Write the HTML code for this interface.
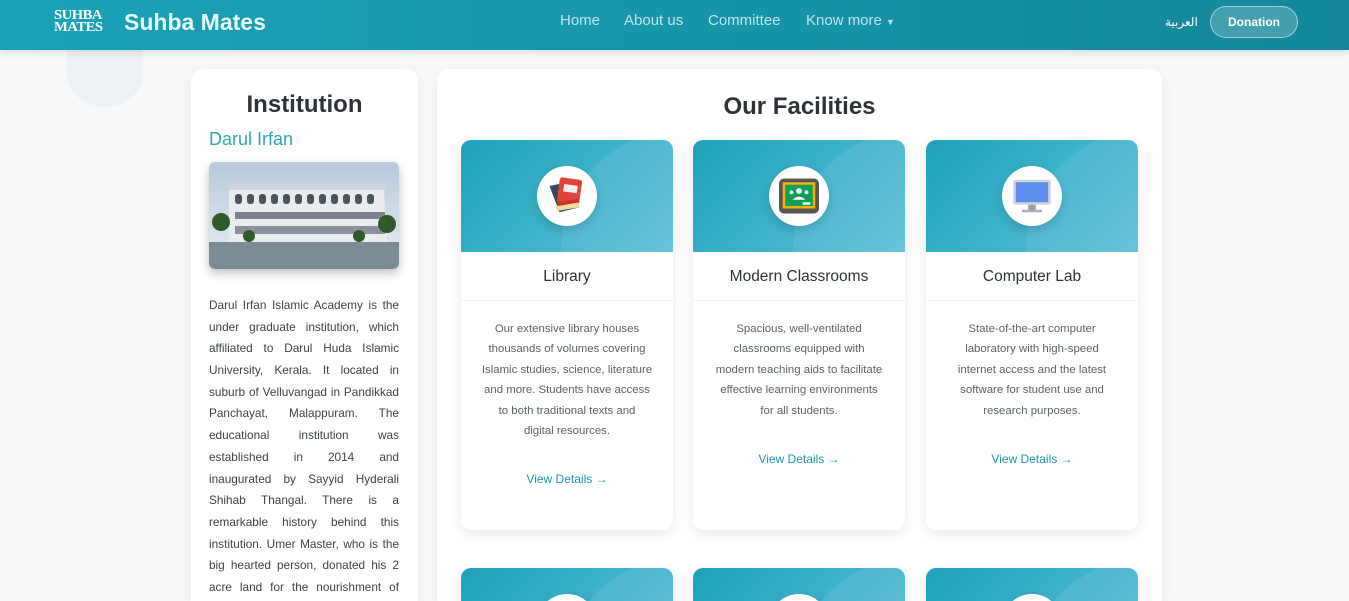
<!DOCTYPE html>
<html><head><meta charset="utf-8"><style>
*{box-sizing:border-box;margin:0;padding:0}
html,body{width:1349px;height:601px;overflow:hidden}
body{background:#f6f8fa;font-family:"Liberation Sans",sans-serif;position:relative}
.nav{position:absolute;left:0;top:0;width:1349px;height:50px;background:linear-gradient(90deg,#1ba2b8,#138799);box-shadow:0 2px 8px rgba(0,0,0,.12);z-index:5}
.logo{position:absolute;left:54px;top:10px;color:#fff;font-family:"Liberation Serif",serif;font-weight:bold;font-size:14px;line-height:12px;letter-spacing:-.5px;transform:scaleX(1.05);transform-origin:left}
.brand{position:absolute;left:124px;top:9px;color:#e6fbff;font-weight:bold;font-size:23px}
.links{position:absolute;top:12px;font-size:15px;color:#bfe6ee}
.links span{position:absolute;white-space:nowrap}
.ar{position:absolute;left:1165px;top:15px;color:#fff;font-size:12px;font-family:"DejaVu Sans",sans-serif}
.don{position:absolute;left:1210px;top:6px;width:88px;height:32px;border:1px solid rgba(255,255,255,.5);border-radius:16px;background:rgba(255,255,255,.2);color:#fff;font-weight:bold;font-size:12px;text-align:center;line-height:30px}
.blob{position:absolute;left:67px;top:40px;width:76px;height:67px;border-radius:0 0 50% 50%;background:#edf3f4}
.side{position:absolute;left:191px;top:69px;width:227px;height:532px;background:#fff;border-radius:12px 12px 0 0;box-shadow:0 4px 14px rgba(0,0,0,.06)}
.side h2{position:absolute;left:0;width:227px;top:22px;text-align:center;font-size:24px;color:#2d3338}
.side h3{position:absolute;left:18px;top:60px;font-size:18px;font-weight:normal;color:#2aa6bb}
.img{position:absolute;left:18px;top:93px;width:190px;height:107px;border-radius:6px;overflow:hidden;box-shadow:0 4px 10px rgba(0,0,0,.25)}
.stxt{position:absolute;left:18px;top:226px;width:190px;font-size:11.8px;line-height:21.7px;color:#3d4348}
.stxt div{text-align:justify;text-align-last:justify;white-space:nowrap;height:21.7px}
.main{position:absolute;left:437px;top:69px;width:725px;height:532px;background:#fff;border-radius:12px 12px 0 0;box-shadow:0 4px 14px rgba(0,0,0,.06)}
.main h2{position:absolute;left:0;width:725px;top:24px;text-align:center;font-size:24px;color:#2d3338}
.card{position:absolute;width:212px;height:390px;background:#fff;border-radius:10px;box-shadow:0 4px 14px rgba(0,0,0,.09);overflow:hidden}
.card.b{height:33px;border-radius:10px 10px 0 0}
.hd{height:112px;background:linear-gradient(135deg,#1ea3bb,#5bbfd8);position:relative;overflow:hidden}
.hd:after{content:"";position:absolute;left:100px;top:-10px;width:240px;height:240px;border-radius:50%;background:rgba(255,255,255,.08)}
.ic{position:absolute;left:76px;top:26px;width:60px;height:60px;border-radius:50%;background:#fff;box-shadow:0 4px 10px rgba(0,0,0,.15);z-index:2}
.ic svg{position:absolute;left:10px;top:10px}
.tt{height:49px;border-bottom:1px solid #eef0f2;text-align:center;line-height:49px;font-size:15.5px;color:#2d3338}
.ds{padding:18px 4px 0;text-align:center;font-size:11.4px;line-height:20.4px;color:#5a6268;white-space:nowrap}
.vd{text-align:center;font-size:12px;color:#1a98b0;margin-top:31px}
</style></head><body>
<div class="nav">
<div class="logo">SUHBA<br>MATES</div>
<div class="brand">Suhba Mates</div>
<div class="links"><span style="left:560px">Home</span><span style="left:624px">About us</span><span style="left:708px">Committee</span><span style="left:806px">Know more <span style="font-size:9px;position:static">▼</span></span></div>
<div class="ar">العربية</div>
<div class="don">Donation</div>
</div>
<div class="blob"></div>
<div class="side">
<h2>Institution</h2>
<h3>Darul Irfan</h3>
<div class="img"><svg width="190" height="107" viewBox="0 0 190 107">
<defs><linearGradient id="sk" x1="0" y1="0" x2="0" y2="1"><stop offset="0" stop-color="#b7c9dc"/><stop offset="1" stop-color="#e8eef4"/></linearGradient></defs>
<rect width="190" height="107" fill="url(#sk)"/>
<polygon points="20,22 175,28 178,82 20,84" fill="#e9ecef"/>
<rect x="20" y="22" width="158" height="6" fill="#cfd5db"/>
<g fill="#4b5560">
<rect x="26" y="32" width="7" height="10" rx="3"/><rect x="38" y="32" width="7" height="10" rx="3"/><rect x="50" y="32" width="7" height="10" rx="3"/><rect x="62" y="32" width="7" height="10" rx="3"/><rect x="74" y="32" width="7" height="10" rx="3"/><rect x="86" y="32" width="7" height="10" rx="3"/><rect x="98" y="32" width="7" height="10" rx="3"/><rect x="110" y="32" width="7" height="10" rx="3"/><rect x="122" y="32" width="7" height="10" rx="3"/><rect x="134" y="32" width="7" height="10" rx="3"/><rect x="146" y="32" width="7" height="10" rx="3"/><rect x="158" y="32" width="7" height="10" rx="3"/>
<rect x="26" y="50" width="150" height="7" opacity=".7"/><rect x="26" y="64" width="150" height="8" opacity=".6"/></g>
<rect x="0" y="80" width="190" height="27" fill="#7c8c94"/>
<g fill="#2f5a2a"><circle cx="12" cy="60" r="9"/><circle cx="178" cy="62" r="9"/><circle cx="40" cy="74" r="6"/><circle cx="150" cy="74" r="6"/></g>
</svg></div>
<div class="stxt">
<div>Darul Irfan Islamic Academy is the</div>
<div>under graduate institution, which</div>
<div>affiliated to Darul Huda Islamic</div>
<div>University, Kerala. It located in</div>
<div>suburb of Velluvangad in Pandikkad</div>
<div>Panchayat, Malappuram. The</div>
<div>educational institution was</div>
<div>established in 2014 and</div>
<div>inaugurated by Sayyid Hyderali</div>
<div>Shihab Thangal. There is a</div>
<div>remarkable history behind this</div>
<div>institution. Umer Master, who is the</div>
<div>big hearted person, donated his 2</div>
<div>acre land for the nourishment of</div>
</div>
</div>
<div class="main"><h2>Our Facilities</h2></div>

<div class="card" style="left:461px;top:140px">
<div class="hd"><div class="ic"><svg width="40" height="40" viewBox="0 0 32 32"><path d="M2 8l14-3 10 20-16 4z" fill="#34495e"/><rect x="9" y="2" width="18" height="20" rx="2" fill="#e0443a" transform="rotate(8 18 12)"/><rect x="13" y="7" width="11" height="6" fill="#eee" transform="rotate(8 18 12)"/><path d="M7 24l18-3 1 4-18 3z" fill="#f3d9a4"/><path d="M8 21l17-3 1 3-17 3z" fill="#c0392b"/></svg></div></div>
<div class="tt">Library</div>
<div class="ds">Our extensive library houses<br>thousands of volumes covering<br>Islamic studies, science, literature<br>and more. Students have access<br>to both traditional texts and<br>digital resources.</div>
<div class="vd">View Details →</div></div>

<div class="card" style="left:693px;top:140px">
<div class="hd"><div class="ic"><svg width="40" height="40" viewBox="0 0 32 32"><rect x="0" y="2" width="32" height="28" rx="4" fill="#5d5555"/><rect x="3" y="5" width="26" height="21" fill="#f4b400"/><rect x="5" y="7" width="22" height="17" fill="#0f9d58"/><circle cx="16" cy="12" r="2.3" fill="#fff"/><circle cx="10" cy="13" r="1.6" fill="#cfe"/><circle cx="22" cy="13" r="1.6" fill="#cfe"/><path d="M11 19q5-5 10 0z" fill="#fff"/><rect x="19" y="21" width="6" height="2" fill="#fff"/></svg></div></div>
<div class="tt">Modern Classrooms</div>
<div class="ds">Spacious, well-ventilated<br>classrooms equipped with<br>modern teaching aids to facilitate<br>effective learning environments<br>for all students.</div>
<div class="vd">View Details →</div></div>

<div class="card" style="left:926px;top:140px">
<div class="hd"><div class="ic"><svg width="40" height="40" viewBox="0 0 32 32"><rect x="1" y="3" width="30" height="20" rx="2" fill="#d0d4d8"/><rect x="3" y="5" width="26" height="16" rx="1" fill="#5c8ff0"/><rect x="13" y="23" width="6" height="5" fill="#9aa0a6"/><rect x="8" y="27" width="16" height="2" fill="#aab"/></svg></div></div>
<div class="tt">Computer Lab</div>
<div class="ds">State-of-the-art computer<br>laboratory with high-speed<br>internet access and the latest<br>software for student use and<br>research purposes.</div>
<div class="vd">View Details →</div></div>

<div class="card b" style="left:461px;top:568px"><div class="hd"><div class="ic"></div></div></div>
<div class="card b" style="left:693px;top:568px"><div class="hd"><div class="ic"></div></div></div>
<div class="card b" style="left:926px;top:568px"><div class="hd"><div class="ic"></div></div></div>
</body></html>
